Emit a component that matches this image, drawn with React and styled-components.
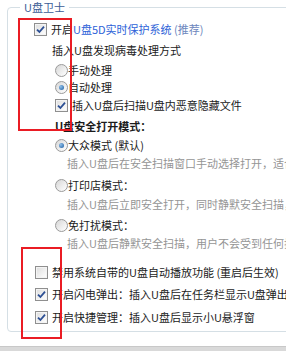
import React from "react";
import styled, { createGlobalStyle } from "styled-components";

const Global = createGlobalStyle`
  html, body {
    margin: 0;
    padding: 0;
    background: #fff;
  }
  body {
    font-family: "Microsoft YaHei", "Noto Sans CJK SC", "Noto Sans", sans-serif;
    font-size: 11px;
    color: #1b1b1b;
  }
`;

const Page = styled.div`
  position: relative;
  width: 286px;
  height: 351px;
  overflow: hidden;
  background: #fff;
`;

const Group = styled.div`
  position: relative;
  margin: 7px 0 0 7px;
  width: 300px;
  height: 325px;
  box-sizing: border-box;
  border: 1px solid #d5dfe5;
  border-radius: 4px;
  padding-top: 13px;
  display: flex;
  flex-direction: column;
`;

const Legend = styled.div`
  position: absolute;
  top: -8px;
  left: 12px;
  padding: 0 4px;
  background: #fff;
  color: #3b5c96;
  font-size: 11px;
  line-height: 14px;
`;

const Row = styled.div`
  display: flex;
  align-items: center;
  height: 16px;
  margin-top: ${(p) => p.$gap || 0}px;
  padding-left: ${(p) => p.$indent}px;
  white-space: nowrap;
  line-height: 16px;
  color: ${(p) => (p.$muted ? "#959595" : "#1b1b1b")};
  font-weight: ${(p) => (p.$bold ? 700 : 400)};
`;

const Box = styled.span`
  flex: none;
  position: relative;
  width: 11px;
  height: 11px;
  margin-right: 4px;
  border: 1px solid #8f8f8f;
  background: linear-gradient(135deg, #dcdcdc 0%, #f6f6f6 70%, #fff 100%);
  box-shadow: inset 0 0 0 1px #f4f4f4;
  svg {
    position: absolute;
    left: 1px;
    top: 1px;
  }
`;

const Radio = styled.span`
  flex: none;
  position: relative;
  width: 11px;
  height: 11px;
  margin-right: 0;
  border: 1px solid #9a9a9a;
  border-radius: 50%;
  background: linear-gradient(135deg, #d6d6d6 0%, #f4f4f4 70%, #fff 100%);
  &::after {
    content: "";
    display: ${(p) => (p.$on ? "block" : "none")};
    position: absolute;
    left: 3px;
    top: 3px;
    width: 5px;
    height: 5px;
    border-radius: 50%;
    background: radial-gradient(circle at 35% 35%, #8fc0ea, #1c5a9e);
  }
`;

const Blue = styled.span`
  color: #2d62d8;
`;

const Hint = styled.span`
  color: #6d86bd;
`;

const Mark = styled.div`
  position: absolute;
  box-sizing: border-box;
  border: 2px solid #ea1c24;
  left: ${(p) => p.$x}px;
  top: ${(p) => p.$y}px;
  width: ${(p) => p.$w}px;
  height: ${(p) => p.$h}px;
`;

const Bottom = styled.div`
  position: absolute;
  left: 0;
  right: 0;
  bottom: 0;
  height: 4px;
  background: #d9d9d9;
  border-top: 1px solid #c8c8c8;
`;

function Check({ on }) {
  return (
    <Box>
      {on && (
        <svg width="9" height="9" viewBox="0 0 9 9">
          <path d="M1 4.6 L3.4 7 L8 1.6" fill="none" stroke="#2c4f94" strokeWidth="1.8" />
        </svg>
      )}
    </Box>
  );
}

export default function App() {
  return (
    <Page>
      <Global />
      <Group>
        <Legend>U盘卫士</Legend>
        <Row $indent={26}>
          <Check on />
          开启<Blue>U盘5D实时保护系统</Blue>&nbsp;<Hint>(推荐)</Hint>
        </Row>
        <Row $indent={44} $gap={5}>插入U盘发现病毒处理方式</Row>
        <Row $indent={47} $gap={4}>
          <Radio />
          手动处理
        </Row>
        <Row $indent={47} $gap={1}>
          <Radio $on />
          自动处理
        </Row>
        <Row $indent={47} $gap={2}>
          <Check on />
          插入U盘后扫描U盘内恶意隐藏文件
        </Row>
        <Row $indent={47} $gap={5} $bold>U盘安全打开模式：</Row>
        <Row $indent={47} $gap={3}>
          <Radio $on />
          大众模式 (默认)
        </Row>
        <Row $indent={59} $gap={2} $muted>
          插入U盘后在安全扫描窗口手动选择打开，适合普通用户
        </Row>
        <Row $indent={47} $gap={6}>
          <Radio />
          打印店模式：
        </Row>
        <Row $indent={59} $gap={3} $muted>
          插入U盘后立即安全打开，同时静默安全扫描，适合打印店
        </Row>
        <Row $indent={47} $gap={5}>
          <Radio />
          免打扰模式：
        </Row>
        <Row $indent={59} $gap={2} $muted>
          插入U盘后静默安全扫描，用户不会受到任何打扰
        </Row>
        <Row $indent={27} $gap={13}>
          <Check />
          禁用系统自带的U盘自动播放功能 (重启后生效)
        </Row>
        <Row $indent={27} $gap={6}>
          <Check on />
          开启闪电弹出：插入U盘后在任务栏显示U盘弹出图标
        </Row>
        <Row $indent={27} $gap={7}>
          <Check on />
          开启快捷管理：插入U盘后显示小U悬浮窗
        </Row>
      </Group>
      <Mark $x={18} $y={18} $w={54} $h={113} />
      <Mark $x={21} $y={247} $w={41} $h={92} />
      <Bottom />
    </Page>
  );
}
